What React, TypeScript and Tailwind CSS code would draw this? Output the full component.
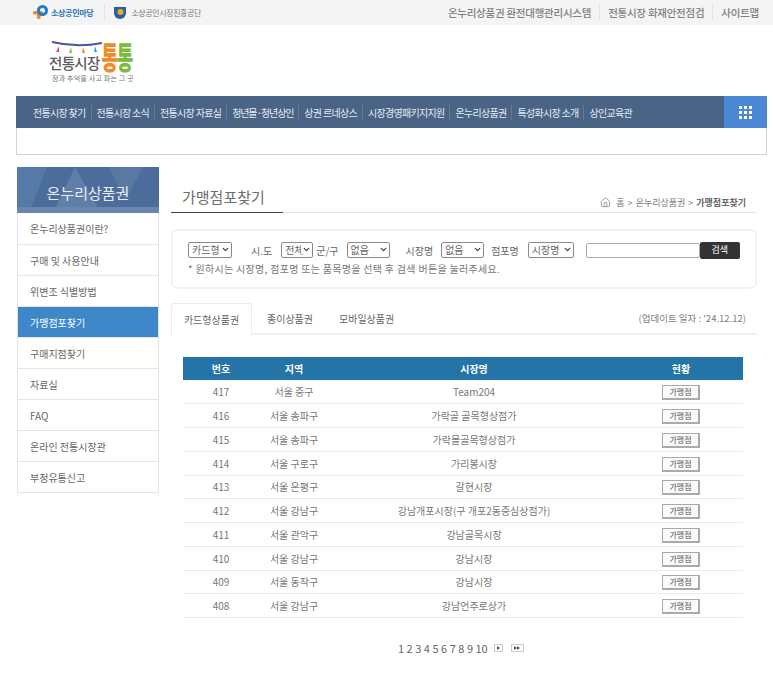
import { ChevronDown, Home } from 'lucide-react';

const menu = ['전통시장 찾기', '전통시장 소식', '전통시장 자료실', '청년몰·청년상인', '상권 르네상스', '시장경영패키지지원', '온누리상품권', '특성화시장 소개', '상인교육관'];
const side = ['온누리상품권이란?', '구매 및 사용안내', '위변조 식별방법', '가맹점포찾기', '구매지점찾기', '자료실', 'FAQ', '온라인 전통시장관', '부정유통신고'];
const rows = [
  ['417', '서울 중구', 'Team204'],
  ['416', '서울 송파구', '가락골 골목형상점가'],
  ['415', '서울 송파구', '가락몰골목형상점가'],
  ['414', '서울 구로구', '가리봉시장'],
  ['413', '서울 은평구', '갈현시장'],
  ['412', '서울 강남구', '강남개포시장(구 개포2동중심상점가)'],
  ['411', '서울 관악구', '강남골목시장'],
  ['410', '서울 강남구', '강남시장'],
  ['409', '서울 동작구', '강남시장'],
  ['408', '서울 강남구', '강남언주로상가'],
];

function Sel({ label, w }: { label: string; w: string }) {
  return (
    <div className={`${w} relative h-[16px]`}>
      <select className="w-full h-full appearance-none border border-[#8a8a8a] rounded-[2px] bg-white text-[10px] text-[#666] pl-[3px] pr-0 py-0 leading-none" defaultValue={label}>
        <option>{label}</option>
      </select>
      <span className="absolute right-[2px] top-[3px] bg-white pl-[1px]">
        <ChevronDown size={9} strokeWidth={3.5} className="text-[#444]" />
      </span>
    </div>
  );
}

export default function App() {
  return (
    <div className="w-[773px] h-[675px] overflow-hidden bg-white text-[#666] font-['Noto_Sans_CJK_KR','Noto_Sans',sans-serif]">
      {/* top bar */}
      <div className="h-[25px] bg-[#f4f4f4] flex items-center pl-[33px] pr-[14px]">
        <svg width="16" height="15" viewBox="0 0 16 15" className="mr-[2px]">
          <rect x="0" y="6" width="10" height="3.5" rx="1.5" fill="#f08a24" />
          <rect x="4" y="6" width="3.5" height="8" rx="1.5" fill="#f08a24" />
          <circle cx="9.5" cy="5.5" r="4" fill="none" stroke="#1c7ccf" strokeWidth="3" />
        </svg>
        <span className="text-[8px] font-bold text-[#2a73c0] tracking-[-0.3px]">소상공인마당</span>
        <div className="w-px h-[17px] bg-[#e2e2e2] ml-[11px] mr-[8px]" />
        <svg width="14" height="13" viewBox="0 0 14 13" className="mr-[4px]">
          <path d="M1 1h12v6a6 6 0 0 1-12 0z" fill="#2c5f9e" />
          <circle cx="7.5" cy="6" r="3" fill="#f0a830" />
        </svg>
        <span className="text-[8px] text-[#777] tracking-[-0.4px]">소상공인시장진흥공단</span>
        <div className="ml-auto flex items-center text-[10.5px] text-[#808080] font-medium tracking-[-0.25px]">
          <span>온누리상품권 환전대행관리시스템</span>
          <div className="w-px h-[15px] bg-[#e2e2e2] mx-[8px]" />
          <span>전통시장 화재안전점검</span>
          <div className="w-px h-[15px] bg-[#e2e2e2] mx-[8px]" />
          <span>사이트맵</span>
        </div>
      </div>

      {/* logo */}
      <div className="h-[71px] pl-[49px] pt-[16px]">
        <div className="w-[90px]">
          <svg width="52" height="13" viewBox="0 0 52 13" className="block ml-[2px]">
            <path d="M1 1 Q26 7 51 2" fill="none" stroke="#4b52a8" strokeWidth="2" />
            <path d="M8 5l-3 6h3z" fill="#e8478f" />
            <path d="M20 6l-2 6h3z" fill="#8cc63f" />
            <path d="M32 6l-1 6h3z" fill="#f08a24" />
            <path d="M44 5l-1 6h3z" fill="#27a9e1" />
          </svg>
          <div className="flex items-center h-[18px]">
            <span className="text-[14.5px] leading-[18px] font-medium text-[#5c5c5c] tracking-[-0.7px] whitespace-nowrap">전통시장</span>
            <span className="inline-block text-[18px] leading-[15px] font-black tracking-[-1.4px] text-[#f08a24] whitespace-nowrap ml-[2px] -mt-[13px] scale-y-[1.7]">통<span className="text-[#7dbb3c]">통</span></span>
          </div>
          <div className="text-[7px] text-[#777] leading-[10px] ml-[3px] mt-[1px] whitespace-nowrap tracking-[0.2px]">정과 추억을 사고 파는 그 곳</div>
        </div>
      </div>

      {/* nav */}
      <div className="mx-[16px] w-[751px]">
        <div className="h-[32px] bg-[#4a6486] flex items-center">
          <div className="flex-1 flex items-center pl-[17px] text-[10px] text-[#e6ebf2] tracking-[-0.7px]">
            {menu.map((m, i) => (
              <span key={m} className={`whitespace-nowrap ${i > 0 ? 'border-l border-[#64799a] ml-[5px] pl-[5px]' : ''} ${i === 3 ? 'tracking-[-1.1px]' : ''}`}>{m}</span>
            ))}
          </div>
          <div className="w-[43px] h-full bg-[#4a88d6] flex items-center justify-center">
            <div className="grid grid-cols-3 gap-[2px]">
              {Array.from({ length: 9 }).map((_, i) => <div key={i} className="w-[3px] h-[3px] bg-white" />)}
            </div>
          </div>
        </div>
        <div className="h-[27px] border border-t-0 border-[#d4d4d4] bg-white" />
      </div>

      <div className="flex pl-[17px] pt-[12px]">
        {/* sidebar */}
        <div className="w-[142px] shrink-0">
          <div className="relative h-[46px] bg-[#4c6c9c] overflow-hidden flex items-center justify-center pt-[6px]">
            <svg width="142" height="46" viewBox="0 0 142 46" className="absolute inset-0">
              <path d="M0 0h30L12 46H0z" fill="#567aa8" />
              <path d="M36 46l22-46 26 46z" fill="#5f7fa9" />
              <path d="M92 0h34l-18 34z" fill="#5a78a2" />
              <path d="M0 40h142v6H0z" fill="#6a86ad" />
            </svg>
            <span className="relative text-[15px] text-[#e8edf4]">온누리상품권</span>
          </div>
          <div className="border-x border-b border-[#e4e4e4]">
            {side.map((s, i) => (
              <div
                key={s}
                className={`h-[31px] flex items-center pl-[12px] text-[10px] ${i > 0 ? 'border-t border-[#e6e6e6]' : ''} ${s === '가맹점포찾기' ? 'bg-[#3e87c8] text-white' : 'text-[#666]'}`}
              >
                {s}
              </div>
            ))}
          </div>
        </div>

        {/* content */}
        <div className="ml-[12px] w-[586px]">
          <div className="h-[46px] border-b border-[#e4e4e4] flex items-end justify-between pr-[11px] pb-[3px] relative">
            <span className="text-[15px] leading-[24px] text-[#6e6e6e] pl-[11px]">가맹점포찾기</span>
            <div className="flex items-center text-[9px] text-[#777] gap-[3px]">
              <Home size={11} className="text-[#999] mr-[2px]" />
              <span>홈</span><span>&gt;</span><span>온누리상품권</span><span>&gt;</span><span className="font-bold text-[#666]">가맹점포찾기</span>
            </div>
            <div className="absolute left-0 -bottom-px w-[112px] h-px bg-[#444]" />
          </div>

          {/* search */}
          <div className="mt-[16px] h-[60px] border-2 border-[#f2f2f2] rounded-[6px] pl-[15px] pt-[11px] text-[10px]">
            <div className="flex items-center h-[16px]">
              <Sel label="카드형" w="w-[44px]" />
              <span className="ml-[19px] mr-[9px]">시.도</span>
              <Sel label="전체" w="w-[32px]" />
              <span className="ml-[3px] mr-[8px]">군/구</span>
              <Sel label="없음" w="w-[43px]" />
              <span className="ml-[16px] mr-[8px]">시장명</span>
              <Sel label="없음" w="w-[43px]" />
              <span className="ml-[7px] mr-[9px]">점포명</span>
              <Sel label="시장명" w="w-[46px]" />
              <input className="ml-[12px] w-[114px] h-[15px] border border-[#aaa] rounded-[2px] bg-white" readOnly />
              <button className="w-[40px] h-[17px] bg-[#333] rounded-[2px] text-white text-[9px]">검색</button>
            </div>
            <div className="mt-[4px] text-[10px] leading-[14px] text-[#777] tracking-[0.3px]">* 원하시는 시장명, 점포명 또는 품목명을 선택 후 검색 버튼을 눌러주세요.</div>
          </div>

          {/* tabs */}
          <div className="mt-[14px] h-[32px] border-b-2 border-[#f0f0f0] flex items-end pr-[11px] text-[10px]">
            <div className="w-[81px] h-[32px] border border-b-0 border-[#ececec] rounded-t-[3px] bg-white -mb-[2px] flex items-center justify-center">카드형상품권</div>
            <div className="ml-[15px] h-[30px] flex items-center">종이상품권</div>
            <div className="ml-[26px] h-[30px] flex items-center">모바일상품권</div>
            <div className="ml-auto h-[30px] flex items-center text-[9.5px] text-[#808080]">(업데이트 일자 : &apos;24.12.12)</div>
          </div>

          {/* table */}
          <table className="mt-[22px] ml-[12px] w-[560px] border-collapse text-[10px] text-[#777] table-fixed">
            <thead>
              <tr className="h-[23px] bg-[#2474a8] text-white text-[10px]">
                <th className="w-[76px] font-bold">번호</th>
                <th className="w-[70px] font-bold">지역</th>
                <th className="w-[290px] font-bold">시장명</th>
                <th className="font-bold">현황</th>
              </tr>
            </thead>
            <tbody>
              {rows.map((r) => (
                <tr key={r[0]} className="h-[23.75px] border-b border-[#ebebeb] text-center">
                  <td>{r[0]}</td>
                  <td>{r[1]}</td>
                  <td>{r[2]}</td>
                  <td>
                    <button className="w-[38px] h-[15px] border border-[#aaa] border-b-2 border-r-2 bg-[#fafafa] text-[8px] leading-none text-[#555] align-middle">가맹점</button>
                  </td>
                </tr>
              ))}
            </tbody>
          </table>

          {/* pagination */}
          <div className="mt-[22px] ml-[227px] flex items-center text-[11px] text-[#666] h-[16px]">
            <div className="flex gap-[2.5px]">
              {[1, 2, 3, 4, 5, 6, 7, 8, 9, 10].map((n) => <span key={n}>{n}</span>)}
            </div>
            <div className="ml-[6px] w-[9px] h-[8px] border border-[#ccc] flex items-center justify-center">
              <div className="border-y-[2px] border-y-transparent border-l-[3px] border-l-[#555]" />
            </div>
            <div className="ml-[8px] w-[13px] h-[8px] border border-[#ccc] flex items-center justify-center">
              <div className="border-y-[2px] border-y-transparent border-l-[3px] border-l-[#555]" />
              <div className="border-y-[2px] border-y-transparent border-l-[3px] border-l-[#555]" />
            </div>
          </div>
        </div>
      </div>
    </div>
  );
}
